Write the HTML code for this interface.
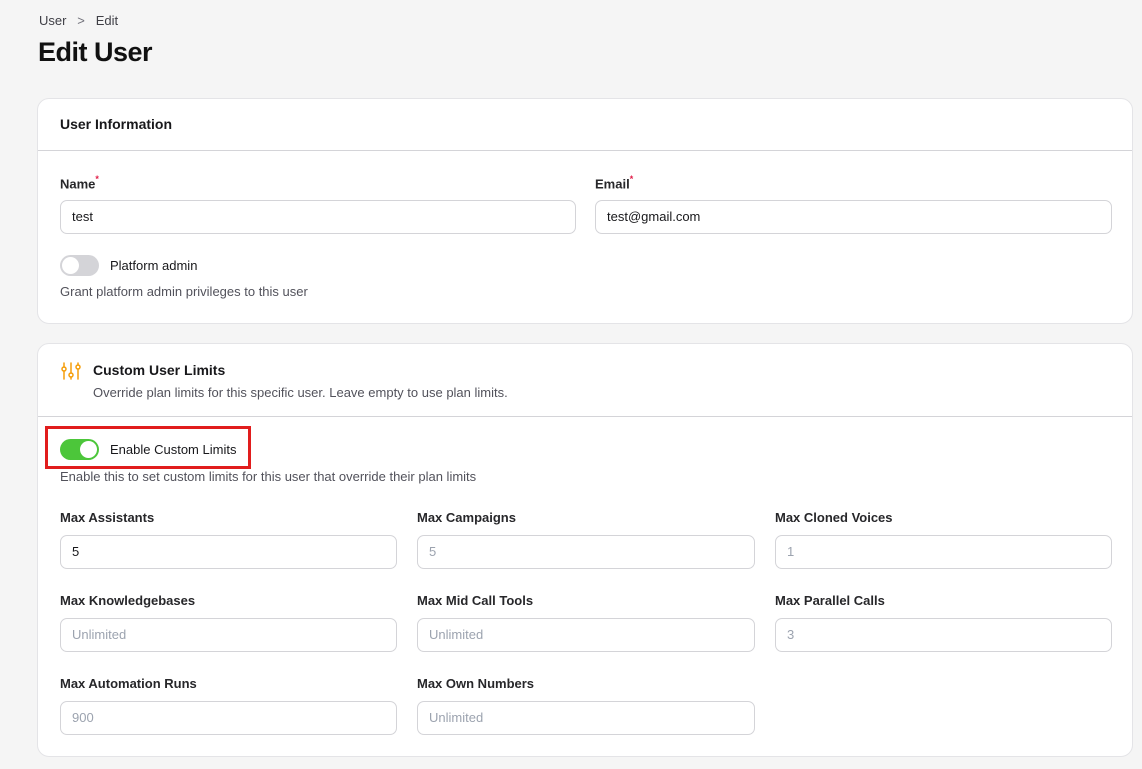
<!DOCTYPE html>
<html><head><style>
*{box-sizing:border-box;margin:0;padding:0}
body{width:1142px;height:769px;background:#f5f5f5;font-family:"Liberation Sans",sans-serif;color:#18181b;position:relative;overflow:hidden}
.a{position:absolute}
.crumb{left:39px;top:13px;font-size:13px;color:#3f3f46}
h1{position:absolute;left:38px;top:37px;font-size:27px;font-weight:bold;letter-spacing:-0.5px;color:#111}
.card{position:absolute;left:37px;width:1096px;background:#fff;border:1px solid #e4e4e7;border-radius:12px}
.div{position:absolute;left:0;right:0;height:1px;background:#d4d4d8}
.lbl{position:absolute;font-size:13px;font-weight:bold;color:#27272a}
.lbl sup{color:#e11d48;font-size:9px;position:relative;top:-1px}
.inp{position:absolute;height:34px;border:1px solid #d4d4d8;border-radius:7px;font-size:13px;padding:8px 11px;color:#18181b;background:#fff}
.ph{color:#9ca3af}
.small{position:absolute;font-size:13px;color:#52525b}
.tog{position:absolute;width:39px;height:21px;border-radius:11px}
.tog i{position:absolute;top:2px;width:17px;height:17px;border-radius:50%;background:#fff}
</style></head><body>
<div class="a crumb">User &nbsp;&nbsp;<span style="color:#71717a">&gt;</span>&nbsp;&nbsp; Edit</div>
<h1>Edit User</h1>

<div class="card" style="top:98px;height:226px">
<div class="a" style="left:22px;top:17px;font-size:14px;font-weight:bold">User Information</div>
<div class="div" style="top:51px"></div>
<div class="lbl" style="left:22px;top:76px">Name<sup>*</sup></div>
<div class="lbl" style="left:557px;top:76px">Email<sup>*</sup></div>
<div class="inp" style="left:22px;top:101px;width:516px">test</div>
<div class="inp" style="left:557px;top:101px;width:517px">test@gmail.com</div>
<div class="tog" style="left:22px;top:156px;background:#d4d4d8"><i style="left:2px"></i></div>
<div class="lbl" style="left:72px;top:159px;font-weight:normal;color:#18181b">Platform admin</div>
<div class="small" style="left:22px;top:185px">Grant platform admin privileges to this user</div>
</div>

<div class="card" style="top:343px;height:414px">
<svg class="a" style="left:23px;top:17px" width="20" height="20" viewBox="0 0 20 20" fill="none" stroke="#f59e0b" stroke-width="1.5" stroke-linecap="round"><path d="M3 2v4M3 10v8M10 2v10M10 16v2M17 2v2M17 8v10"/><circle cx="3" cy="8" r="2"/><circle cx="10" cy="14" r="2"/><circle cx="17" cy="6" r="2"/></svg>
<div class="a" style="left:55px;top:18px;font-size:14px;font-weight:bold">Custom User Limits</div>
<div class="small" style="left:55px;top:41px">Override plan limits for this specific user. Leave empty to use plan limits.</div>
<div class="div" style="top:72px"></div>
<div class="a" style="left:7px;top:82px;width:206px;height:43px;border:3px solid #e11d1d"></div>
<div class="tog" style="left:22px;top:95px;background:#4cc63a"><i style="left:20px"></i></div>
<div class="lbl" style="left:72px;top:98px;font-weight:normal;color:#18181b">Enable Custom Limits</div>
<div class="small" style="left:22px;top:125px">Enable this to set custom limits for this user that override their plan limits</div>

<div class="lbl" style="left:22px;top:166px">Max Assistants</div>
<div class="lbl" style="left:379px;top:166px">Max Campaigns</div>
<div class="lbl" style="left:737px;top:166px">Max Cloned Voices</div>
<div class="inp" style="left:22px;top:191px;width:337px">5</div>
<div class="inp ph" style="left:379px;top:191px;width:338px">5</div>
<div class="inp ph" style="left:737px;top:191px;width:337px">1</div>

<div class="lbl" style="left:22px;top:249px">Max Knowledgebases</div>
<div class="lbl" style="left:379px;top:249px">Max Mid Call Tools</div>
<div class="lbl" style="left:737px;top:249px">Max Parallel Calls</div>
<div class="inp ph" style="left:22px;top:274px;width:337px">Unlimited</div>
<div class="inp ph" style="left:379px;top:274px;width:338px">Unlimited</div>
<div class="inp ph" style="left:737px;top:274px;width:337px">3</div>

<div class="lbl" style="left:22px;top:332px">Max Automation Runs</div>
<div class="lbl" style="left:379px;top:332px">Max Own Numbers</div>
<div class="inp ph" style="left:22px;top:357px;width:337px">900</div>
<div class="inp ph" style="left:379px;top:357px;width:338px">Unlimited</div>
</div>
</body></html>
